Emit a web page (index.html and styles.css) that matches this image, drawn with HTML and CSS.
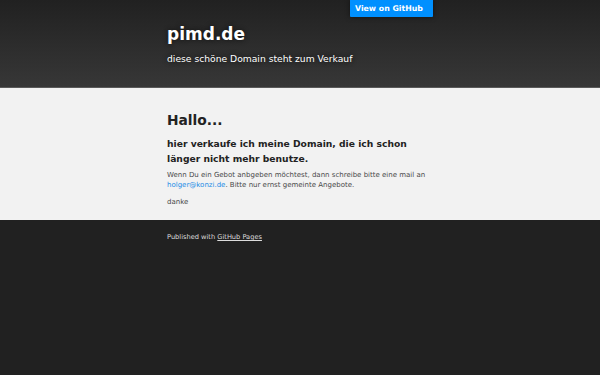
FILE: index.html
```html
<!DOCTYPE html>
<html lang="de">
<head>
<meta charset="utf-8">
<title>pimd.de</title>
<link rel="stylesheet" href="styles.css">
</head>
<body>
<header class="header-wrap">
  <div class="inner header-inner">
    <a class="forkme" href="#">View on GitHub</a>
    <h1 class="project-title">pimd.de</h1>
    <h2 class="project-tagline">diese schöne Domain steht zum Verkauf</h2>
  </div>
</header>
<main class="main-wrap">
  <section class="inner main-inner">
    <h1 class="hello">Hallo...</h1>
    <h2 class="sub">hier verkaufe ich meine Domain, die ich schon länger nicht mehr benutze.</h2>
    <p class="text">Wenn Du ein Gebot anbgeben möchtest, dann schreibe bitte eine mail an<br><a class="mail" href="#">holger@konzi.de</a>. Bitte nur ernst gemeinte Angebote.</p>
    <p class="text thanks">danke</p>
  </section>
</main>
<footer class="footer-wrap">
  <div class="inner footer-inner">
    <p class="copyright">Published with <a class="gh-link" href="#">GitHub Pages</a></p>
  </div>
</footer>
</body>
</html>
```
FILE: styles.css
```css
html, body {
  margin: 0;
  padding: 0;
}
body {
  background: #212121;
  font-family: "DejaVu Sans", Verdana, sans-serif;
  color: #666;
  min-height: 375px;
}
.inner {
  width: 266px;
  margin: 0 auto;
  position: relative;
}
.header-wrap {
  background: linear-gradient(to bottom, #212121, #373737);
  border-bottom: 1px solid #5a5a5a;
}
.header-inner {
  padding: 24px 0 22.2px;
}
.forkme {
  position: absolute;
  top: 0;
  right: 0;
  width: 78px;
  height: 17px;
  padding-left: 5px;
  box-sizing: content-box;
  background: #0090ff;
  color: #fff;
  font-size: 7.8px;
  font-weight: bold;
  line-height: 17px;
  text-decoration: none;
  box-shadow: 0 0 5px rgba(0,0,0,0.5);
  border-radius: 0 0 1px 1px;
}
.project-title {
  margin: 0;
  font-size: 17px;
  line-height: 20px;
  font-weight: bold;
  color: #fff;
  text-shadow: 0 0 5px #111;
}
.project-tagline {
  margin: 8.8px 0 0;
  font-size: 9.2px;
  line-height: 12px;
  font-weight: normal;
  color: #fff;
  text-shadow: 0 0 5px #111;
}
.main-wrap {
  display: block;
  background: #f2f2f2;
}
.main-inner {
  padding: 23.2px 0 13px;
}
.hello {
  margin: 0;
  font-size: 13.8px;
  line-height: 18px;
  font-weight: bold;
  color: #222;
}
.sub {
  margin: 6.5px 0 0;
  font-size: 9.2px;
  line-height: 15px;
  font-weight: bold;
  color: #222;
}
.text {
  margin: 4.2px 0 0;
  font-size: 7px;
  line-height: 10px;
  color: #494949;
}
.thanks {
  margin-top: 7.5px;
}
.mail {
  color: #1e8ce6;
  text-decoration: none;
}
.footer-wrap {
  background: #212121;
}
.footer-inner {
  padding: 11.7px 0 20px;
}
.copyright {
  margin: 0;
  font-size: 6.65px;
  line-height: 10px;
  color: #ddd;
}
.gh-link {
  color: #ddd;
  text-decoration: underline;
}
```
